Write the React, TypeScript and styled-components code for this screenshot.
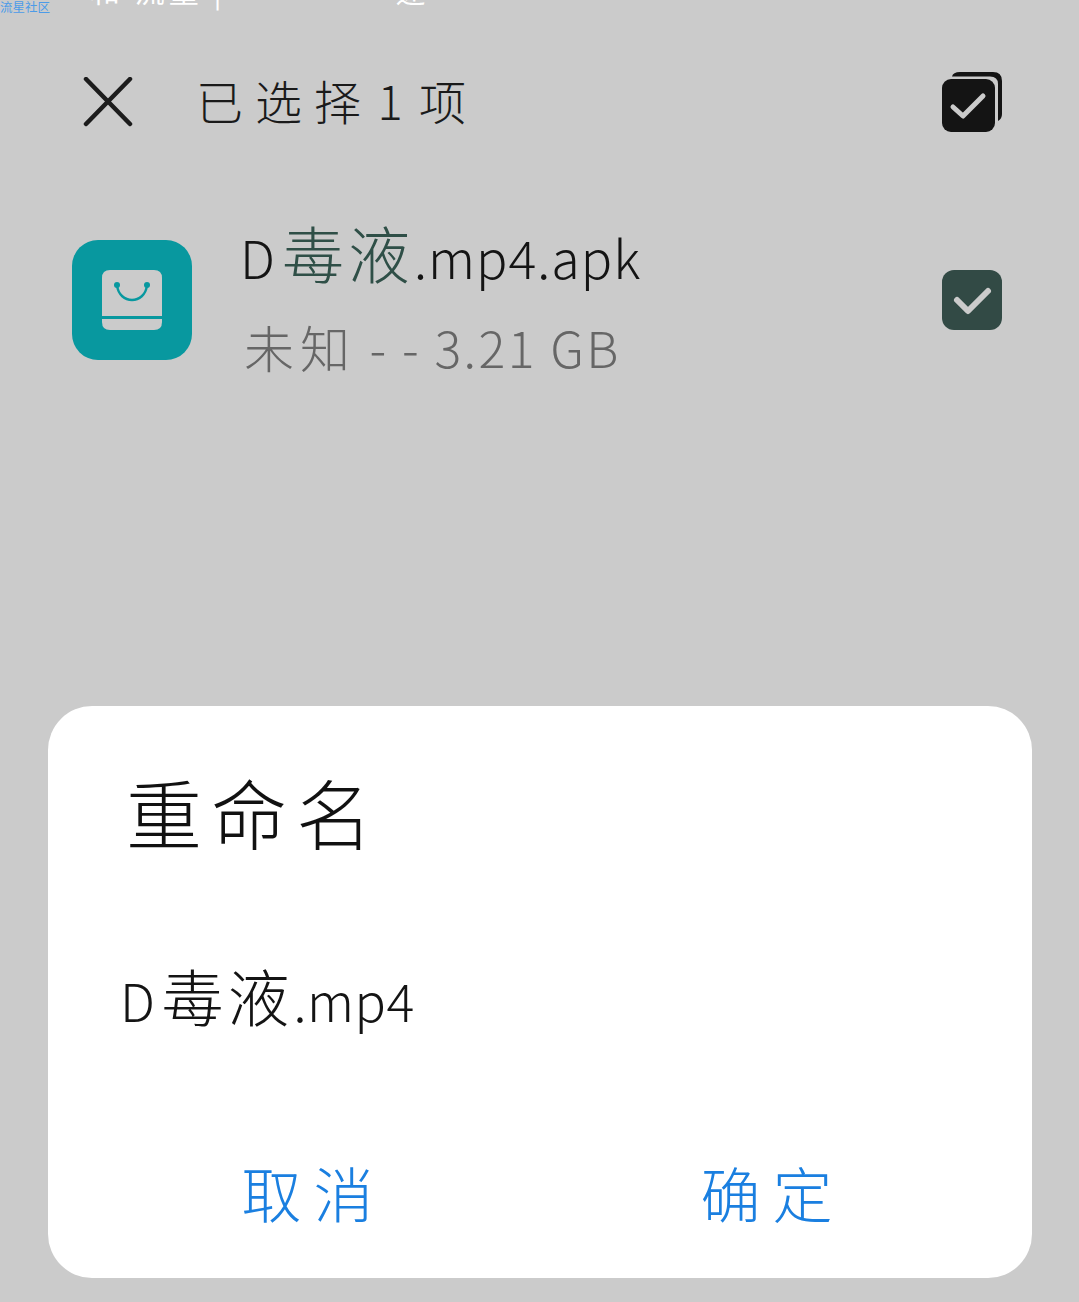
import styled, { createGlobalStyle } from "styled-components";

const GlobalStyle = createGlobalStyle`
  *, *::before, *::after {
    box-sizing: border-box;
  }
  html, body {
    margin: 0;
    padding: 0;
    background: #cbcbcb;
  }
  body {
    font-family: "Noto Sans CJK SC", "Liberation Sans", sans-serif;
  }
`;

const CheckMark = ({ color }: { color: string }) => (
  <svg width="60" height="60" viewBox="0 0 60 60" fill="none">
    <path d="M15 30 L26 41 L46 21" stroke={color} strokeWidth="6" strokeLinecap="round" strokeLinejoin="round" />
  </svg>
);

const SelectAllIcon = () => (
  <svg width="62" height="62" viewBox="0 0 62 62" fill="none">
    <path d="M11 5.5 Q12 1 19 1 H52 Q61 1 61 10 V43 Q61 48 57 50 V13 Q57 5.5 49 5.5 Z" fill="#141414" />
    <rect x="1" y="8" width="53" height="53" rx="9" fill="#141414" />
    <path d="M12 36 L22 45 L42 25" stroke="#cbcbcb" strokeWidth="5" strokeLinecap="round" strokeLinejoin="round" />
  </svg>
);

const BagIcon = () => (
  <svg width="60" height="60" viewBox="0 0 60 60" fill="none">
    <path d="M8 0 H52 Q60 0 60 8 V46 H0 V8 Q0 0 8 0 Z" fill="#cbcbcb" />
    <path d="M0 49 H60 V52 Q60 60 52 60 H8 Q0 60 0 52 Z" fill="#cbcbcb" />
    <path d="M15 15 C17 35 43 35 45 15" stroke="#08989f" strokeWidth="2.4" />
    <circle cx="15" cy="15" r="3" fill="#08989f" />
    <circle cx="45" cy="15" r="3" fill="#08989f" />
  </svg>
);

export default function App() {
  return (
    <>
      <GlobalStyle />
      <Page>
        <Watermark>流星社区</Watermark>
        <ClippedStatus>
          和 流量 |<StatusSpeed>速</StatusSpeed>
        </ClippedStatus>
        <Header>
          <CloseButton>
            <svg width="50" height="50" viewBox="0 0 50 50" fill="none">
              <path d="M3 2 L47 47 M47 2 L3 47" stroke="#1c1c1c" strokeWidth="4.5" strokeLinecap="round" />
            </svg>
          </CloseButton>
          <Title>已选择 1 项</Title>
          <SelectAll>
            <SelectAllIcon />
          </SelectAll>
        </Header>
        <FileRow>
          <AppIcon>
            <BagIcon />
          </AppIcon>
          <FileInfo>
            <FileName>
              D<Cjk $color="#2f4f47">毒液</Cjk>.mp4.apk
            </FileName>
            <FileMeta>
              <MetaLabel>未知</MetaLabel> - - 3.21 GB
            </FileMeta>
          </FileInfo>
          <RowCheck>
            <CheckMark color="#cbcbcb" />
          </RowCheck>
        </FileRow>
        <Dialog>
          <DialogTitle>重命名</DialogTitle>
          <NameField>
            D<Cjk>毒液</Cjk>.mp4
          </NameField>
          <Actions>
            <ActionButton>取消</ActionButton>
            <ActionButton>确定</ActionButton>
          </Actions>
        </Dialog>
      </Page>
    </>
  );
}

const Page = styled.div`
  position: relative;
  width: 1079px;
  height: 1302px;
  overflow: hidden;
  background: #cbcbcb;
  display: flex;
  flex-direction: column;
`;

const Watermark = styled.div`
  position: absolute;
  top: -1px;
  left: 0;
  font-size: 12.5px;
  line-height: 15px;
  color: #4c9be8;
`;

const ClippedStatus = styled.div`
  position: absolute;
  top: -26px;
  left: 90px;
  font-size: 30px;
  line-height: 30px;
  letter-spacing: 4px;
  color: #ffffff;
`;

const StatusSpeed = styled.span`
  margin-left: 170px;
`;

const Header = styled.div`
  display: flex;
  align-items: center;
  flex: none;
  height: 60px;
  margin-top: 72px;
  padding: 0 76px 0 83px;
`;

const CloseButton = styled.div`
  display: flex;
  width: 50px;
  height: 50px;
  margin-right: 63px;
`;

const Title = styled.div`
  flex: 1;
  font-size: 47px;
  line-height: 60px;
  font-weight: 300;
  letter-spacing: 12px;
  word-spacing: -18px;
  color: #1a1a1a;
  margin-bottom: 4px;
`;

const SelectAll = styled.div`
  display: flex;
`;

const FileRow = styled.div`
  display: flex;
  align-items: center;
  flex: none;
  margin-top: 108px;
  padding: 0 77px 0 72px;
  height: 120px;
`;

const AppIcon = styled.div`
  display: flex;
  align-items: center;
  justify-content: center;
  flex: none;
  width: 120px;
  height: 120px;
  border-radius: 26px;
  background: #08989f;
`;

const FileInfo = styled.div`
  flex: 1;
  margin-left: 48px;
  padding-bottom: 7px;
  display: flex;
  flex-direction: column;
  gap: 33px;
`;

const FileName = styled.div`
  font-size: 52px;
  line-height: 60px;
  font-weight: 300;
  letter-spacing: 1px;
  white-space: nowrap;
  color: #141414;
`;

const Cjk = styled.span<{ $color?: string }>`
  font-size: 62px;
  letter-spacing: 4px;
  margin-left: 6px;
  color: ${(p) => p.$color || "inherit"};
`;

const FileMeta = styled.div`
  margin-left: 4px;
  font-size: 50px;
  line-height: 52px;
  font-weight: 300;
  letter-spacing: 2.4px;
  white-space: nowrap;
  color: #666666;
`;

const MetaLabel = styled.span`
  letter-spacing: 6px;
`;

const RowCheck = styled.div`
  display: flex;
  flex: none;
  width: 60px;
  height: 60px;
  border-radius: 12px;
  background: #324a45;
`;

const Dialog = styled.div`
  flex: none;
  margin: 346px 47px 0 48px;
  height: 572px;
  border-radius: 44px;
  background: #ffffff;
  display: flex;
  flex-direction: column;
  padding: 65px 72px 0;
`;

const DialogTitle = styled.div`
  font-size: 76px;
  line-height: 80px;
  font-weight: 300;
  letter-spacing: 9px;
  color: #111111;
  margin-left: 6px;
`;

const NameField = styled.div`
  margin-top: 109px;
  font-size: 52px;
  line-height: 70px;
  font-weight: 300;
  letter-spacing: 0.5px;
  white-space: nowrap;
  color: #141414;
`;

const Actions = styled.div`
  margin: 122px -42px 0 -36px;
  display: grid;
  grid-template-columns: 1fr 1fr;
`;

const ActionButton = styled.div`
  text-align: center;
  font-size: 60px;
  line-height: 70px;
  font-weight: 300;
  letter-spacing: 12px;
  color: #1a7fe0;
`;
